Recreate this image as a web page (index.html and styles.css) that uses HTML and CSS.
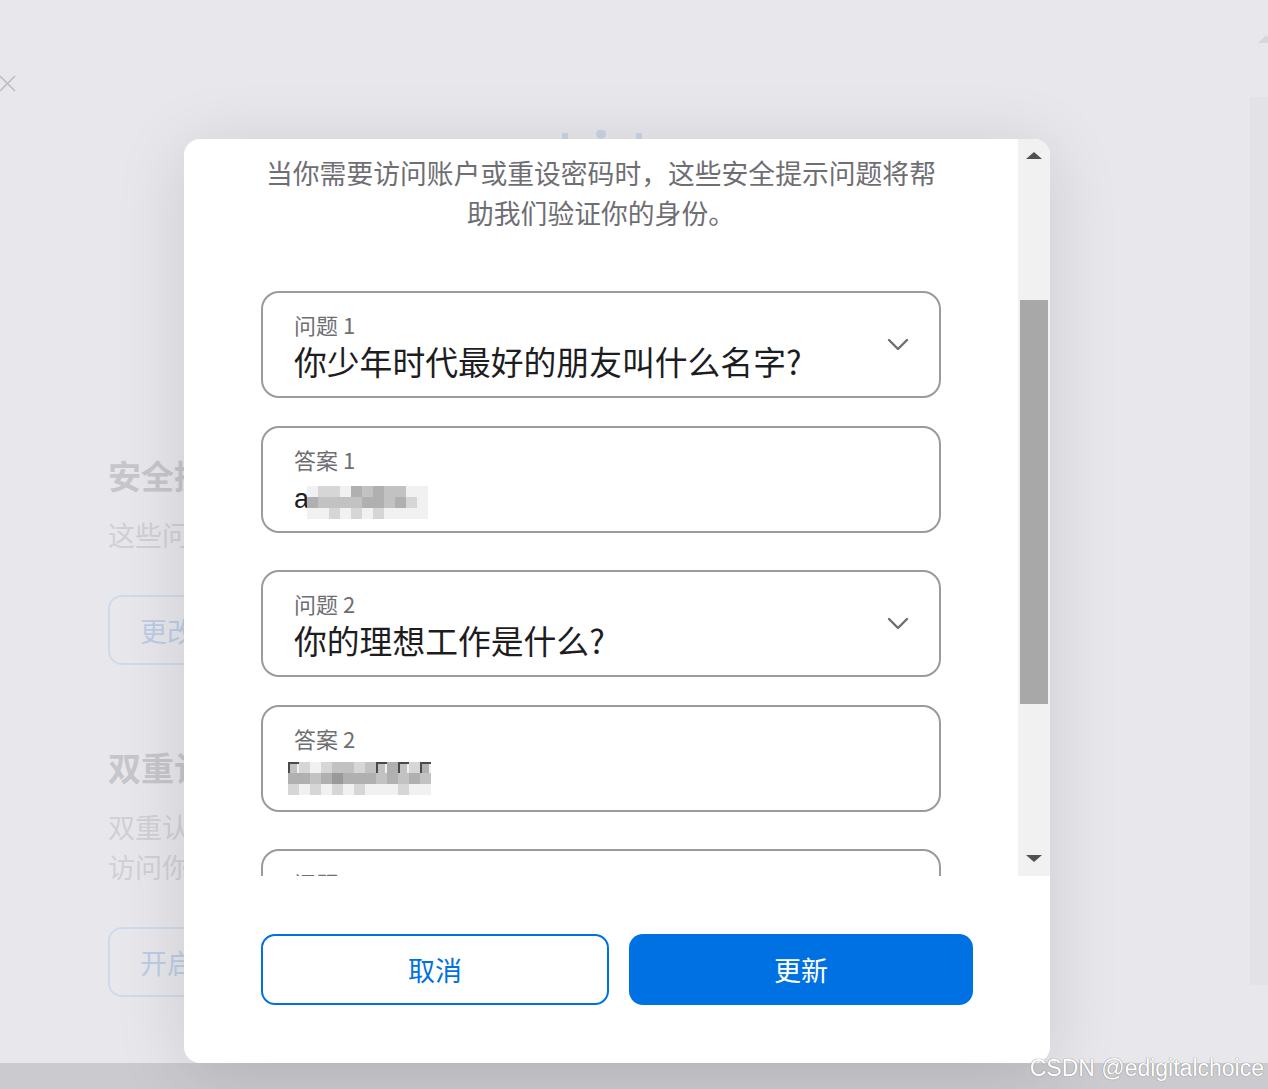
FILE: index.html
```html
<!DOCTYPE html>
<html lang="zh-CN">
<head>
    <meta charset="UTF-8">
    <meta name="viewport" content="width=device-width, initial-scale=1.0">
    <title>安全提示问题</title>
    <link rel="stylesheet" href="styles.css">
</head>
<body>
    <div class="screen">
        <div class="main">
            <div class="close-btn">
                <svg width="18" height="18" viewBox="0 0 18 18"><path d="M0 1 L15 16 M15 1 L0 16" stroke="#bdbdc2" stroke-width="1.6" fill="none"/></svg>
            </div>
            <div class="hero-icon">
                <svg width="82" height="14" viewBox="0 0 82 14"><rect x="2" y="3" width="6" height="11" fill="#c9d5e7"/><circle cx="41" cy="4" r="5" fill="#c9d5e7"/><rect x="76" y="3" width="6" height="11" fill="#c9d5e7"/></svg>
            </div>

            <section class="setting">
                <h2>安全提示问题</h2>
                <p>这些问题会在你需要验证身份时使用。</p>
                <button class="ghost-btn">更改问题</button>
            </section>

            <section class="setting second">
                <h2>双重认证</h2>
                <p>双重认证为你的账户提供了额外的安全保护，可确保只有你本人<br>访问你的账户，即使有人知道你的密码也无法登录。</p>
                <button class="ghost-btn">开启双重认证</button>
            </section>
        </div>
        <div class="page-bar">
            <div class="page-arrow"></div>
            <div class="page-track"></div>
        </div>
    </div>
    <div class="watermark">CSDN @edigitalchoice</div>

    <div class="modal">
        <div class="modal-body">
            <div class="scroll-area">
                <p class="intro">当你需要访问账户或重设密码时，这些安全提示问题将帮助我们验证你的身份。</p>

                <div class="qa-group">
                    <div class="field">
                        <div class="field-text">
                            <div class="field-label">问题 1</div>
                            <div class="field-value">你少年时代最好的朋友叫什么名字?</div>
                        </div>
                        <svg class="chevron" width="22" height="14" viewBox="0 0 22 14"><path d="M2 2 L11 11 L20 2" stroke="#6e6e73" stroke-width="2.4" fill="none" stroke-linecap="round" stroke-linejoin="round"/></svg>
                    </div>
                    <div class="field">
                        <div class="field-text">
                            <div class="field-label">答案 1</div>
                            <div class="field-value masked">
                                <span class="masked-text">a</span>
                                <span class="mosaic">
                                    <i class="e"></i><i class="a"></i><i class="a"></i><i class="e"></i><i class="c"></i><i class="b"></i><i class="c"></i><i class="b"></i><i class="b"></i><i class="e"></i><i class="e"></i>
                                    <i class="c"></i><i class="b"></i><i class="b"></i><i class="b"></i><i class="b"></i><i class="c"></i><i class="c"></i><i class="b"></i><i class="c"></i><i class="a"></i><i class="e"></i>
                                    <i class="e"></i><i class="e"></i><i class="a"></i><i class="e"></i><i class="a"></i><i class="e"></i><i class="a"></i><i class="e"></i><i class="e"></i><i class="e"></i><i class="e"></i>
                                </span>
                            </div>
                        </div>
                    </div>
                </div>

                <div class="qa-group">
                    <div class="field">
                        <div class="field-text">
                            <div class="field-label">问题 2</div>
                            <div class="field-value">你的理想工作是什么?</div>
                        </div>
                        <svg class="chevron" width="22" height="14" viewBox="0 0 22 14"><path d="M2 2 L11 11 L20 2" stroke="#6e6e73" stroke-width="2.4" fill="none" stroke-linecap="round" stroke-linejoin="round"/></svg>
                    </div>
                    <div class="field">
                        <div class="field-text">
                            <div class="field-label">答案 2</div>
                            <div class="field-value masked">
                                <span class="mosaic wide">
                                    <i class="b t"></i><i class="a"></i><i class="e"></i><i class="a"></i><i class="b"></i><i class="b"></i><i class="a"></i><i class="b"></i><i class="b t"></i><i class="c"></i><i class="b t"></i><i class="a"></i><i class="c t"></i>
                                    <i class="c"></i><i class="c"></i><i class="b"></i><i class="c"></i><i class="d"></i><i class="c"></i><i class="c"></i><i class="c"></i><i class="b"></i><i class="c"></i><i class="b"></i><i class="c"></i><i class="b"></i>
                                    <i class="a"></i><i class="e"></i><i class="a"></i><i class="e"></i><i class="a"></i><i class="e"></i><i class="a"></i><i class="e"></i><i class="e"></i><i class="e"></i><i class="a"></i><i class="e"></i><i class="e"></i>
                                </span>
                            </div>
                        </div>
                    </div>
                </div>

                <div class="qa-group">
                    <div class="field">
                        <div class="field-text">
                            <div class="field-label">问题 3</div>
                            <div class="field-value">你的第一个宠物叫什么名字?</div>
                        </div>
                    </div>
                </div>
            </div>
            <div class="scrollbar">
                <div class="arrow-up"></div>
                <div class="thumb"></div>
                <div class="arrow-down"></div>
            </div>
        </div>
        <div class="modal-footer">
            <button class="btn btn-cancel">取消</button>
            <button class="btn btn-primary">更新</button>
        </div>
    </div>
</body>
</html>
```

FILE: styles.css
```css
* {
    margin: 0;
    padding: 0;
    box-sizing: border-box;
}

body {
    width: 1268px;
    height: 1089px;
    overflow: hidden;
    background: #cacacf;
    font-family: "Noto Sans CJK SC", "Liberation Sans", sans-serif;
    position: relative;
}

.screen {
    display: flex;
    height: 1063px;
    background: #e8e8ec;
}

.main {
    flex: 1;
}

.close-btn {
    padding-top: 74px;
    height: 92px;
}

.hero-icon {
    margin: 33px 0 0 560px;
    height: 14px;
}

.setting {
    padding-left: 108px;
    margin-top: 314px;
}

.setting.second {
    margin-top: 80px;
}

.setting h2 {
    font-size: 33px;
    line-height: 44px;
    font-weight: bold;
    color: #c6c6cb;
}

.setting p {
    margin-top: 18px;
    font-size: 27px;
    line-height: 40px;
    color: #d0d0d5;
    white-space: nowrap;
}

.ghost-btn {
    margin-top: 40px;
    width: 300px;
    height: 70px;
    border: 2px solid #cfdbec;
    border-radius: 14px;
    background: transparent;
    font-family: inherit;
    font-size: 27px;
    color: #bccde6;
    text-align: left;
    padding-left: 30px;
}

.page-bar {
    width: 18px;
}

.page-arrow {
    margin: 35px 0 0 8px;
    width: 0;
    height: 0;
    border-left: 8px solid transparent;
    border-right: 8px solid transparent;
    border-bottom: 8px solid #d6d6db;
}

.page-track {
    margin-top: 54px;
    height: 888px;
    background: #e2e2e7;
}

.watermark {
    position: absolute;
    right: 4px;
    bottom: 7px;
    font-family: "Liberation Sans", sans-serif;
    font-size: 23px;
    color: #ffffff;
    text-shadow: 0 0 1px #8a8a8a, 0 0 1px #8a8a8a;
    z-index: 5;
}

/* 弹窗 */
.modal {
    position: absolute;
    left: 184px;
    top: 139px;
    width: 866px;
    height: 924px;
    background: #ffffff;
    border-radius: 16px;
    overflow: hidden;
    box-shadow: 0 10px 70px rgba(0, 0, 0, 0.13);
    display: flex;
    flex-direction: column;
}

.modal-body {
    display: flex;
    height: 737px;
}

.scroll-area {
    flex: 1;
    overflow: hidden;
    padding: 14px 77px 0 77px;
}

.intro {
    width: 680px;
    margin: 0 auto;
    text-align: center;
    font-size: 26.8px;
    line-height: 40px;
    color: #6e6e73;
}

.qa-group {
    display: flex;
    flex-direction: column;
    gap: 28px;
    margin-top: 37px;
}

.qa-group:first-of-type {
    margin-top: 58px;
}

.field {
    display: flex;
    align-items: center;
    height: 107px;
    border: 2px solid #9a9a9f;
    border-radius: 18px;
    padding: 0 30px 0 31px;
}

.field-text {
    flex: 1;
    align-self: flex-start;
    padding-top: 18px;
}

.field-label {
    font-size: 22px;
    line-height: 27px;
    color: #6e6e73;
    margin-bottom: 3px;
}

.field-value {
    font-size: 32.8px;
    line-height: 40px;
    color: #1d1d1f;
    white-space: nowrap;
}

.field-value.masked {
    display: flex;
    align-items: flex-start;
    height: 40px;
}

.masked-text {
    font-family: "Liberation Sans", sans-serif;
    font-size: 27px;
    line-height: 40px;
    margin-top: 3px;
}

.chevron {
    flex-shrink: 0;
}

.mosaic {
    display: grid;
    grid-template-columns: repeat(11, 11px);
    grid-auto-rows: 11px;
    margin-top: 10px;
    margin-left: -2px;
}

.mosaic.wide {
    grid-template-columns: repeat(13, 11px);
    margin-left: -6px;
    margin-top: 7px;
}

.mosaic i { background: #e0e0e0; }
.mosaic i.a { background: #d6d6d6; }
.mosaic i.b { background: #c2c2c2; }
.mosaic i.c { background: #b0b0b0; }
.mosaic i.d { background: #999999; }
.mosaic i.e { background: #f1f1f1; }
.mosaic i.t { box-shadow: inset 2px 2px 0 #4a4a4a, inset -2px 0 0 #f1f1f1; }

.scrollbar {
    width: 32px;
    background: #f1f1f1;
    display: flex;
    flex-direction: column;
    align-items: center;
    padding: 13px 0 14px;
}

.arrow-up {
    width: 0;
    height: 0;
    border-left: 8px solid transparent;
    border-right: 8px solid transparent;
    border-bottom: 7px solid #505050;
}

.thumb {
    margin-top: 141px;
    width: 28px;
    height: 404px;
    background: #a8a8a8;
}

.arrow-down {
    margin-top: auto;
    width: 0;
    height: 0;
    border-left: 8px solid transparent;
    border-right: 8px solid transparent;
    border-top: 7px solid #505050;
}

.modal-footer {
    display: flex;
    gap: 20px;
    padding: 58px 77px;
}

.btn {
    flex: 1 1 0;
    height: 71px;
    border-radius: 14px;
    font-family: inherit;
    font-size: 27px;
    cursor: pointer;
}

.btn-cancel {
    background: #ffffff;
    border: 2px solid #0071e3;
    color: #0071e3;
}

.btn-primary {
    background: #0071e3;
    border: none;
    color: #ffffff;
}
```
